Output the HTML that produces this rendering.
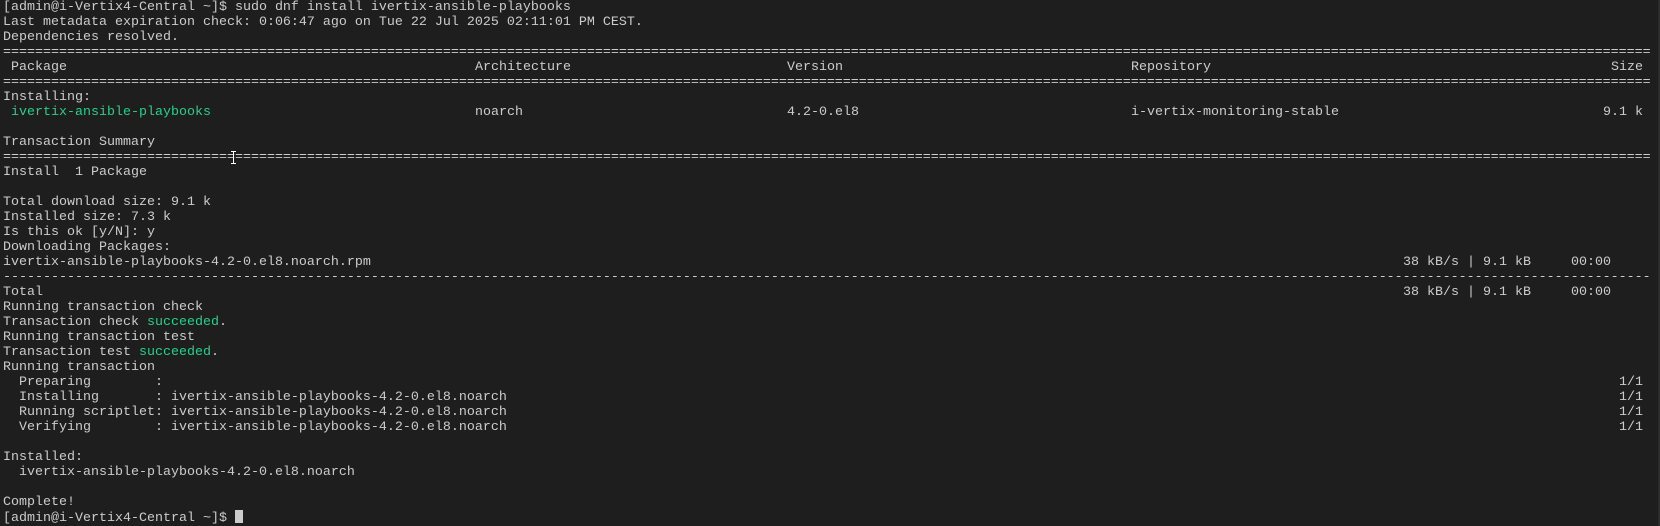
<!DOCTYPE html>
<html><head><meta charset="utf-8"><style>
html,body{margin:0;padding:0;background:#1e1e1e;}
body{width:1660px;height:526px;overflow:hidden;position:relative;font-family:"Liberation Mono",monospace;font-size:13.333px;color:#cccccc;}
.t{position:absolute;left:3px;top:0;}
.l{position:relative;height:15px;line-height:15px;white-space:pre;}
.l span.a{position:absolute;top:0;}
.g{color:#23d18b;}
.rule{width:1648px;overflow:hidden;}
.cur{display:inline-block;width:8px;height:13px;background:#cccccc;vertical-align:-2px;}
.sb{position:absolute;right:0;top:0;width:2px;height:526px;background:#2b2b2b;}
.ib{position:absolute;left:233px;top:151px;width:1px;height:13px;background:#ffffff;}
.ib:before,.ib:after{content:"";position:absolute;left:-2px;width:5px;height:1px;background:#ffffff;}
.ib:before{top:0}.ib:after{bottom:0}
</style></head><body>
<div class="t">
<div class="l">[admin@i-Vertix4-Central ~]$ sudo dnf install ivertix-ansible-playbooks</div>
<div class="l">Last metadata expiration check: 0:06:47 ago on Tue 22 Jul 2025 02:11:01 PM CEST.</div>
<div class="l">Dependencies resolved.</div>
<div class="l rule">================================================================================================================================================================================================================================</div>
<div class="l"> Package<span class="a" style="left:472px">Architecture</span><span class="a" style="left:784px">Version</span><span class="a" style="left:1128px">Repository</span><span class="a" style="left:1608px">Size</span></div>
<div class="l rule">================================================================================================================================================================================================================================</div>
<div class="l">Installing:</div>
<div class="l"> <span class="g">ivertix-ansible-playbooks</span><span class="a" style="left:472px">noarch</span><span class="a" style="left:784px">4.2-0.el8</span><span class="a" style="left:1128px">i-vertix-monitoring-stable</span><span class="a" style="left:1600px">9.1 k</span></div>
<div class="l"> </div>
<div class="l">Transaction Summary</div>
<div class="l rule">================================================================================================================================================================================================================================</div>
<div class="l">Install  1 Package</div>
<div class="l"> </div>
<div class="l">Total download size: 9.1 k</div>
<div class="l">Installed size: 7.3 k</div>
<div class="l">Is this ok [y/N]: y</div>
<div class="l">Downloading Packages:</div>
<div class="l">ivertix-ansible-playbooks-4.2-0.el8.noarch.rpm<span class="a" style="left:1400px">38 kB/s | 9.1 kB     00:00</span></div>
<div class="l rule">--------------------------------------------------------------------------------------------------------------------------------------------------------------------------------------------------------------------------------</div>
<div class="l">Total<span class="a" style="left:1400px">38 kB/s | 9.1 kB     00:00</span></div>
<div class="l">Running transaction check</div>
<div class="l">Transaction check <span class="g">succeeded</span>.</div>
<div class="l">Running transaction test</div>
<div class="l">Transaction test <span class="g">succeeded</span>.</div>
<div class="l">Running transaction</div>
<div class="l">  Preparing        :<span class="a" style="left:1616px">1/1</span></div>
<div class="l">  Installing       : ivertix-ansible-playbooks-4.2-0.el8.noarch<span class="a" style="left:1616px">1/1</span></div>
<div class="l">  Running scriptlet: ivertix-ansible-playbooks-4.2-0.el8.noarch<span class="a" style="left:1616px">1/1</span></div>
<div class="l">  Verifying        : ivertix-ansible-playbooks-4.2-0.el8.noarch<span class="a" style="left:1616px">1/1</span></div>
<div class="l"> </div>
<div class="l">Installed:</div>
<div class="l">  ivertix-ansible-playbooks-4.2-0.el8.noarch</div>
<div class="l"> </div>
<div class="l">Complete!</div>
<div class="l">[admin@i-Vertix4-Central ~]$ <span class="cur"></span></div>
</div>
<div class="ib"></div>
<div class="sb"></div>
</body></html>
